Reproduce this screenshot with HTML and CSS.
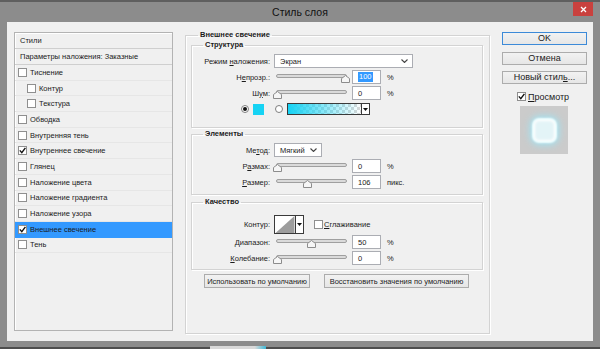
FILE: index.html
```html
<!DOCTYPE html>
<html lang="ru">
  <head>
    <meta charset="UTF-8" />
    <meta name="viewport" content="width=device-width, initial-scale=1.0" />
    <title>Стиль слоя</title>
    <link rel="stylesheet" href="styles.css">
  </head>
  <body>
    <div class="window">
      <header class="titlebar">
        <span></span>
        <h1 class="titlebar-title">Стиль слоя</h1>
        <span class="titlebar-close">
          <svg width="7" height="7" viewBox="0 0 7 7"><path d="M1 1l5 5M6 1l-5 5" stroke="#fff" stroke-width="1.3" /></svg>
        </span>
      </header>

      <div class="client">
        <!-- список стилей -->
        <aside class="styles-list">
          <div class="styles-head">Стили</div>
          <div class="styles-head">Параметры наложения: Заказные</div>
          <div class="style-item"><span class="check"></span>Тиснение</div>
          <div class="style-item sub"><span class="check"></span>Контур</div>
          <div class="style-item sub"><span class="check"></span>Текстура</div>
          <div class="style-item"><span class="check"></span>Обводка</div>
          <div class="style-item"><span class="check"></span>Внутренняя тень</div>
          <div class="style-item">
            <span class="check"><svg viewBox="0 0 7 7"><path d="M0.8 3.4l2 2.2 3.6-4.8" /></svg></span>Внутреннее свечение
          </div>
          <div class="style-item"><span class="check"></span>Глянец</div>
          <div class="style-item"><span class="check"></span>Наложение цвета</div>
          <div class="style-item"><span class="check"></span>Наложение градиента</div>
          <div class="style-item"><span class="check"></span>Наложение узора</div>
          <div class="style-item is-selected">
            <span class="check"><svg viewBox="0 0 7 7"><path d="M0.8 3.4l2 2.2 3.6-4.8" /></svg></span>Внешнее свечение
          </div>
          <div class="style-item"><span class="check"></span>Тень</div>
        </aside>

        <!-- параметры -->
        <main class="settings">
          <fieldset class="group group-main">
            <legend>Внешнее свечение</legend>

            <fieldset class="group group-structure">
              <legend>Структура</legend>
              <div class="row">
                <label>Режим <u>н</u>аложения:</label>
                <div class="select select-blend">
                  Экран
                  <svg class="chevron" viewBox="0 0 7 4"><path d="M0.5 0.5l3 3 3-3" /></svg>
                </div>
              </div>
              <div class="row">
                <label>Н<u>е</u>прозр.:</label>
                <div class="slider">
                  <div class="slider-track"></div>
                  <svg class="slider-thumb" style="--v: 1" viewBox="0 0 9 8"><path d="M0.5 7.5V3.5L4.5 0.5L8.5 3.5V7.5Z" /></svg>
                </div>
                <div class="field"><span class="field-selected">100</span></div>
                <span class="unit">%</span>
              </div>
              <div class="row">
                <label>Ш<u>у</u>м:</label>
                <div class="slider">
                  <div class="slider-track"></div>
                  <svg class="slider-thumb" style="--v: 0" viewBox="0 0 9 8"><path d="M0.5 7.5V3.5L4.5 0.5L8.5 3.5V7.5Z" /></svg>
                </div>
                <div class="field">0</div>
                <span class="unit">%</span>
              </div>
              <div class="row row-color">
                <span class="radio is-on"></span>
                <span class="swatch"></span>
                <span class="radio"></span>
                <div class="gradient-pick">
                  <span class="gradient-bar"></span>
                  <span class="dropdown"><svg viewBox="0 0 5 3"><path d="M0 0h5L2.5 3z" /></svg></span>
                </div>
              </div>
            </fieldset>

            <fieldset class="group group-elements">
              <legend>Элементы</legend>
              <div class="row">
                <label>Ме<u>т</u>од:</label>
                <div class="select select-method">
                  Мягкий
                  <svg class="chevron" viewBox="0 0 7 4"><path d="M0.5 0.5l3 3 3-3" /></svg>
                </div>
              </div>
              <div class="row">
                <label>Р<u>а</u>змах:</label>
                <div class="slider">
                  <div class="slider-track"></div>
                  <svg class="slider-thumb" style="--v: 0" viewBox="0 0 9 8"><path d="M0.5 7.5V3.5L4.5 0.5L8.5 3.5V7.5Z" /></svg>
                </div>
                <div class="field">0</div>
                <span class="unit">%</span>
              </div>
              <div class="row">
                <label><u>Р</u>азмер:</label>
                <div class="slider">
                  <div class="slider-track"></div>
                  <svg class="slider-thumb" style="--v: 0.45" viewBox="0 0 9 8"><path d="M0.5 7.5V3.5L4.5 0.5L8.5 3.5V7.5Z" /></svg>
                </div>
                <div class="field">106</div>
                <span class="unit">пикс.</span>
              </div>
            </fieldset>

            <fieldset class="group group-quality">
              <legend>Качество</legend>
              <div class="row row-contour">
                <label>Контур:</label>
                <div class="contour-pick">
                  <svg class="contour-curve" viewBox="0 0 20 18"><path d="M0 18L20 0V18Z" /></svg>
                  <span class="dropdown"><svg viewBox="0 0 5 3"><path d="M0 0h5L2.5 3z" /></svg></span>
                </div>
                <span class="check check-smooth"></span>
                <span class="check-label"><u>С</u>глаживание</span>
              </div>
              <div class="row">
                <label>Диапазон:</label>
                <div class="slider">
                  <div class="slider-track"></div>
                  <svg class="slider-thumb" style="--v: 0.5" viewBox="0 0 9 8"><path d="M0.5 7.5V3.5L4.5 0.5L8.5 3.5V7.5Z" /></svg>
                </div>
                <div class="field">50</div>
                <span class="unit">%</span>
              </div>
              <div class="row">
                <label><u>К</u>олебание:</label>
                <div class="slider">
                  <div class="slider-track"></div>
                  <svg class="slider-thumb" style="--v: 0" viewBox="0 0 9 8"><path d="M0.5 7.5V3.5L4.5 0.5L8.5 3.5V7.5Z" /></svg>
                </div>
                <div class="field">0</div>
                <span class="unit">%</span>
              </div>
            </fieldset>

            <div class="defaults">
              <button class="btn btn-use">Использовать по умолчанию</button>
              <button class="btn btn-reset">Восстановить значения по умолчанию</button>
            </div>
          </fieldset>
        </main>

        <!-- кнопки справа -->
        <div class="actions">
          <button class="btn btn-side is-default">OK</button>
          <button class="btn btn-side">Отмена</button>
          <button class="btn btn-side">Новый стил<u>ь</u>...</button>
          <div class="preview-toggle">
            <span class="check"><svg viewBox="0 0 7 7"><path d="M0.8 3.4l2 2.2 3.6-4.8" /></svg></span>
            <span><u>П</u>росмотр</span>
          </div>
          <div class="preview">
            <span class="preview-shape"></span>
          </div>
        </div>
      </div>

      <footer class="frame-bottom">
        <span class="taskbar-peek"></span>
      </footer>
    </div>
  </body>
</html>
```

FILE: styles.css
```css
:root {
  --ui-font: "Liberation Sans", Arial, sans-serif;
  --face-color: #f0f0f0;
  --frame-color: #8c8c8c;
  --group-line: #d3d3d3;
  --field-border: #abadb3;
  --select-color: #3399ff;
  --glow-color: #16d3f4;
}
html {
  box-sizing: border-box;
  font-family: var(--ui-font);
  font-size: 7.5px;
  color: #1b1b1b;
}

*,
*:before,
*:after {
  box-sizing: inherit;
}

body {
  margin: 0;
  overflow: hidden;
  background-color: var(--frame-color);
}

u {
  text-decoration-thickness: 1px;
  text-underline-offset: 1px;
}

.window {
  width: 600px;
  height: 349px;
  display: flex;
  flex-direction: column;
}

/* заголовок окна */
.titlebar {
  height: 22px;
  flex: none;
  display: grid;
  grid-template-columns: 1fr auto 1fr;
  align-items: center;
  border-top: 2px solid #5f5f5f;
  background-color: var(--frame-color);
}

.titlebar-title {
  margin: 0;
  font-size: 10.5px;
  font-weight: normal;
  color: #111;
}

.titlebar-close {
  justify-self: end;
  align-self: start;
  width: 20px;
  height: 14px;
  margin-right: 7px;
  display: flex;
  align-items: center;
  justify-content: center;
  background-color: #c9413e;
}

.client {
  height: 319px;
  margin: 0 7px;
  padding: 8px 0 0 7px;
  display: grid;
  grid-template-columns: 159px 305px 89px;
  column-gap: 12px;
  align-items: start;
  background-color: var(--face-color);
}

.frame-bottom {
  flex: 1;
  position: relative;
  border-bottom: 2px solid #4d4d4d;
}

.taskbar-peek {
  position: absolute;
  left: 210px;
  bottom: -2px;
  width: 56px;
  height: 3px;
  background: linear-gradient(to right, #d9d9d9 80%, #3fb8d6);
}

/* список стилей */
.styles-list {
  height: 299px;
  margin-top: 2px;
  border: 1px solid #b3b3b3;
  box-shadow: inset 1px 1px 0 #fff;
}

.styles-head {
  height: 16px;
  padding-left: 5px;
  display: flex;
  align-items: center;
  border-bottom: 1px solid #cfcfcf;
}

.style-item {
  height: 15.7px;
  padding-left: 3px;
  display: flex;
  align-items: center;
  border-bottom: 1px solid #e6e6e6;
}

.style-item.sub {
  padding-left: 12px;
}

.style-item.is-selected {
  background-color: var(--select-color);
  border-bottom-color: var(--select-color);
}

.check {
  width: 9px;
  height: 9px;
  flex: none;
  margin-right: 3px;
  display: flex;
  align-items: center;
  justify-content: center;
  border: 1px solid #8f8f8f;
  background-color: #fff;
}

.check svg {
  width: 7px;
  height: 7px;
  fill: none;
  stroke: #111;
  stroke-width: 1.4;
}

/* группы */
.group {
  margin: 0;
  min-width: 0;
  border: 1px solid var(--group-line);
  box-shadow: inset 1px 1px 0 #fff, 1px 1px 0 #fff;
}

.group legend {
  padding: 0 2px;
  line-height: 10px;
  font-weight: bold;
}

.group-main {
  height: 304px;
  padding: 0 6px 0 5px;
}

.group-main > legend {
  margin-left: 7px;
}

.group-structure,
.group-elements,
.group-quality {
  padding: 3px 0 0 0;
}

.group-structure > legend,
.group-elements > legend,
.group-quality > legend {
  margin-left: 11px;
}

.group-structure {
  padding-bottom: 10px;
}

.group-elements {
  margin-top: 1px;
  padding-bottom: 4px;
}

.group-quality {
  margin-top: 2px;
  padding-top: 7px;
  padding-bottom: 3px;
}

.row {
  height: 16px;
  display: flex;
  align-items: center;
}

.row label {
  width: 78px;
  flex: none;
  margin-right: 4px;
  text-align: right;
}

.select {
  height: 14px;
  padding: 0 4px 0 5px;
  display: flex;
  align-items: center;
  justify-content: space-between;
  border: 1px solid var(--field-border);
  background-color: #fff;
}

.select-blend {
  width: 139px;
}

.select-method {
  width: 48px;
}

.chevron {
  width: 7px;
  height: 4px;
  fill: none;
  stroke: #444;
  stroke-width: 1.1;
}

.slider {
  position: relative;
  width: 71px;
  height: 12px;
  margin-left: 2px;
}

.slider-track {
  height: 4px;
  margin-top: 3px;
  border: 1px solid #9f9f9f;
  border-radius: 2px;
  background-color: #dadada;
}

.slider-thumb {
  position: absolute;
  top: 4px;
  left: calc(1px + var(--v) * 68px);
  width: 9px;
  height: 8px;
  margin-left: -4.5px;
  fill: #f6f6f6;
  stroke: #8c8c8c;
}

.field {
  width: 29px;
  height: 14px;
  margin-left: 5px;
  padding-left: 5px;
  display: flex;
  align-items: center;
  border: 1px solid var(--field-border);
  background-color: #fff;
}

.field-selected {
  padding: 0 1px;
  line-height: 10px;
  color: #fff;
  background-color: var(--select-color);
}

.unit {
  margin-left: 6px;
}

.row-color {
  padding-left: 49px;
}

.radio {
  width: 8px;
  height: 8px;
  flex: none;
  display: flex;
  align-items: center;
  justify-content: center;
  border: 1px solid #7f7f7f;
  border-radius: 50%;
  background-color: #fff;
}

.radio.is-on:after {
  content: "";
  width: 4px;
  height: 4px;
  border-radius: 50%;
  background-color: #111;
}

.swatch {
  width: 11px;
  height: 11px;
  margin: 0 11px 0 4px;
  background-color: var(--glow-color);
}

.gradient-pick {
  width: 83px;
  height: 12px;
  margin-left: 4px;
  display: flex;
  border: 1px solid #3a3a3a;
}

.gradient-bar {
  flex: 1;
  background:
    linear-gradient(to right, var(--glow-color), rgba(22, 211, 244, 0.15) 85%, rgba(22, 211, 244, 0)),
    repeating-conic-gradient(#fff 0 25%, #d8d8d8 0 50%) 0 0 / 6px 6px;
}

.dropdown {
  width: 8px;
  flex: none;
  display: flex;
  align-items: center;
  justify-content: center;
  border-left: 1px solid #3a3a3a;
  background-color: #fff;
}

.dropdown svg {
  width: 5px;
  height: 3px;
  fill: #111;
}

.row-contour {
  height: 20px;
}

.contour-pick {
  height: 19px;
  display: flex;
  border: 1px solid #3a3a3a;
  background-color: #fff;
}

.contour-curve {
  width: 20px;
  height: 17px;
  fill: #9d9d9d;
}

.check-smooth {
  margin-left: 10px;
  margin-right: 1px;
}

/* кнопки */
.btn {
  height: 14px;
  padding: 0;
  font-family: var(--ui-font);
  font-size: 7.5px;
  color: #1b1b1b;
  border: 1px solid #acacac;
  background: linear-gradient(#f2f2f2, #e6e6e6);
}

.defaults {
  margin: 4px 0 0 13px;
  display: flex;
  gap: 14px;
}

.btn-use {
  width: 106px;
}

.btn-reset {
  width: 145px;
}

.actions {
  margin-top: 2px;
  display: flex;
  flex-direction: column;
  align-items: flex-start;
  gap: 6.5px;
}

.btn-side {
  width: 85px;
  height: 13px;
  font-size: 9px;
  line-height: 11px;
}

.btn-side.is-default {
  border-color: #3c8ad8;
}

.preview-toggle {
  height: 12px;
  margin-left: 15px;
  display: flex;
  align-items: center;
  font-size: 9px;
}

.preview-toggle .check {
  margin-right: 2px;
}

.preview {
  width: 48px;
  height: 48px;
  margin: -3px 0 0 18px;
  display: flex;
  align-items: center;
  justify-content: center;
  background-color: #cbcbcb;
}

.preview-shape {
  width: 21px;
  height: 21px;
  border-radius: 5px;
  background-color: #e3f4f7;
  box-shadow:
    inset 0 0 3px 1px #fff,
    0 0 2px 2px #f4ffff,
    0 0 7px 4px rgba(150, 235, 255, 0.75);
}
```
